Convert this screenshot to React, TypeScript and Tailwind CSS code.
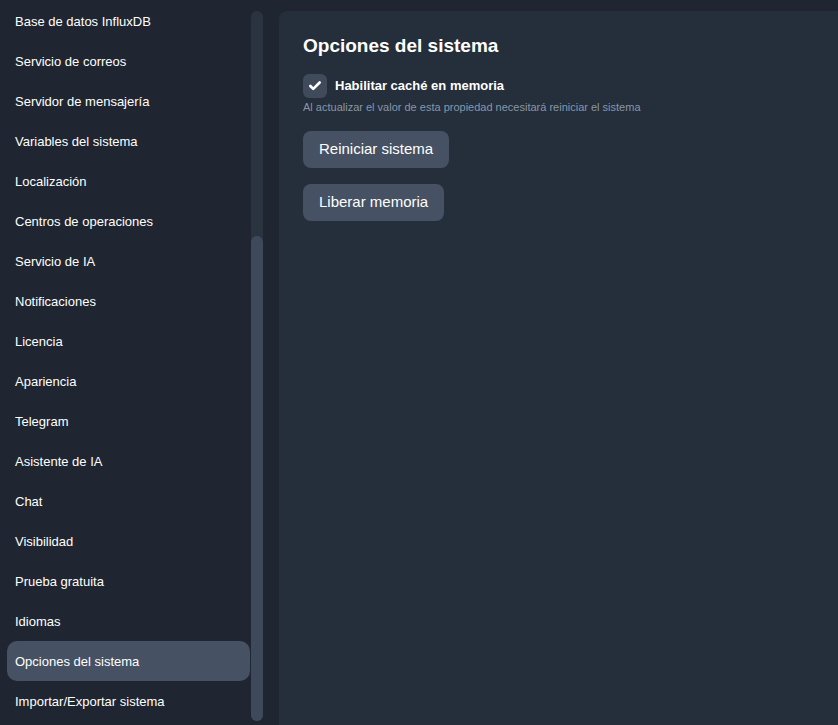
import { Check } from "lucide-react";

const MENU_ITEMS = [
  "Base de datos InfluxDB",
  "Servicio de correos",
  "Servidor de mensajería",
  "Variables del sistema",
  "Localización",
  "Centros de operaciones",
  "Servicio de IA",
  "Notificaciones",
  "Licencia",
  "Apariencia",
  "Telegram",
  "Asistente de IA",
  "Chat",
  "Visibilidad",
  "Prueba gratuita",
  "Idiomas",
  "Opciones del sistema",
  "Importar/Exportar sistema",
];

const ACTIVE = "Opciones del sistema";

const Sidebar = () => (
  <div className="flex h-full w-[263px] shrink-0">
    <nav className="flex h-full w-[251px] flex-col overflow-hidden pl-[7px] pt-[1px]">
      {MENU_ITEMS.map((item) => (
        <div
          key={item}
          className={
            item === ACTIVE
              ? "flex h-10 w-[243px] shrink-0 items-center rounded-[10px] bg-[#465264] px-2 pt-[2px] text-[13px] text-white"
              : "flex h-10 w-[243px] shrink-0 items-center rounded-[10px] px-2 pt-[2px] text-[13px] text-white"
          }
        >
          {item}
        </div>
      ))}
    </nav>
    <div className="mt-[11px] flex h-[710px] w-3 flex-col rounded-full bg-[#2a3340]">
      <div className="mt-[225px] h-[485px] w-3 rounded-full bg-[#3e4a5b]" />
    </div>
  </div>
);

const SystemOptions = () => (
  <main className="ml-4 mt-[11px] flex-1 rounded-tl-lg bg-[#252e3b] px-6 pt-[23px]">
    <h1 className="text-[19px] font-bold leading-[24px] text-white">Opciones del sistema</h1>

    <label className="mt-[16px] flex items-center gap-2">
      <span className="flex h-6 w-6 items-center justify-center rounded-md bg-[#3f4a5b]">
        <Check className="h-[14px] w-[14px] text-white" strokeWidth={4.5} />
      </span>
      <span className="text-[13px] font-bold text-white">Habilitar caché en memoria</span>
    </label>
    <p className="mt-[2px] text-[11px] leading-[14px] text-[#8797a8]">
      Al actualizar el valor de esta propiedad necesitará reiniciar el sistema
    </p>

    <div className="mt-[17px] flex flex-col items-start gap-4">
      <button
        type="button"
        className="h-[37px] rounded-lg bg-[#465264] px-4 text-[15px] text-white"
      >
        Reiniciar sistema
      </button>
      <button
        type="button"
        className="h-[37px] rounded-lg bg-[#465264] px-4 text-[15px] text-white"
      >
        Liberar memoria
      </button>
    </div>
  </main>
);

const App = () => (
  <div
    className="flex h-[725px] w-full overflow-hidden bg-[#1f2631]"
    style={{ fontFamily: '"Liberation Sans", Arial, sans-serif' }}
  >
    <Sidebar />
    <SystemOptions />
  </div>
);

export default App;
